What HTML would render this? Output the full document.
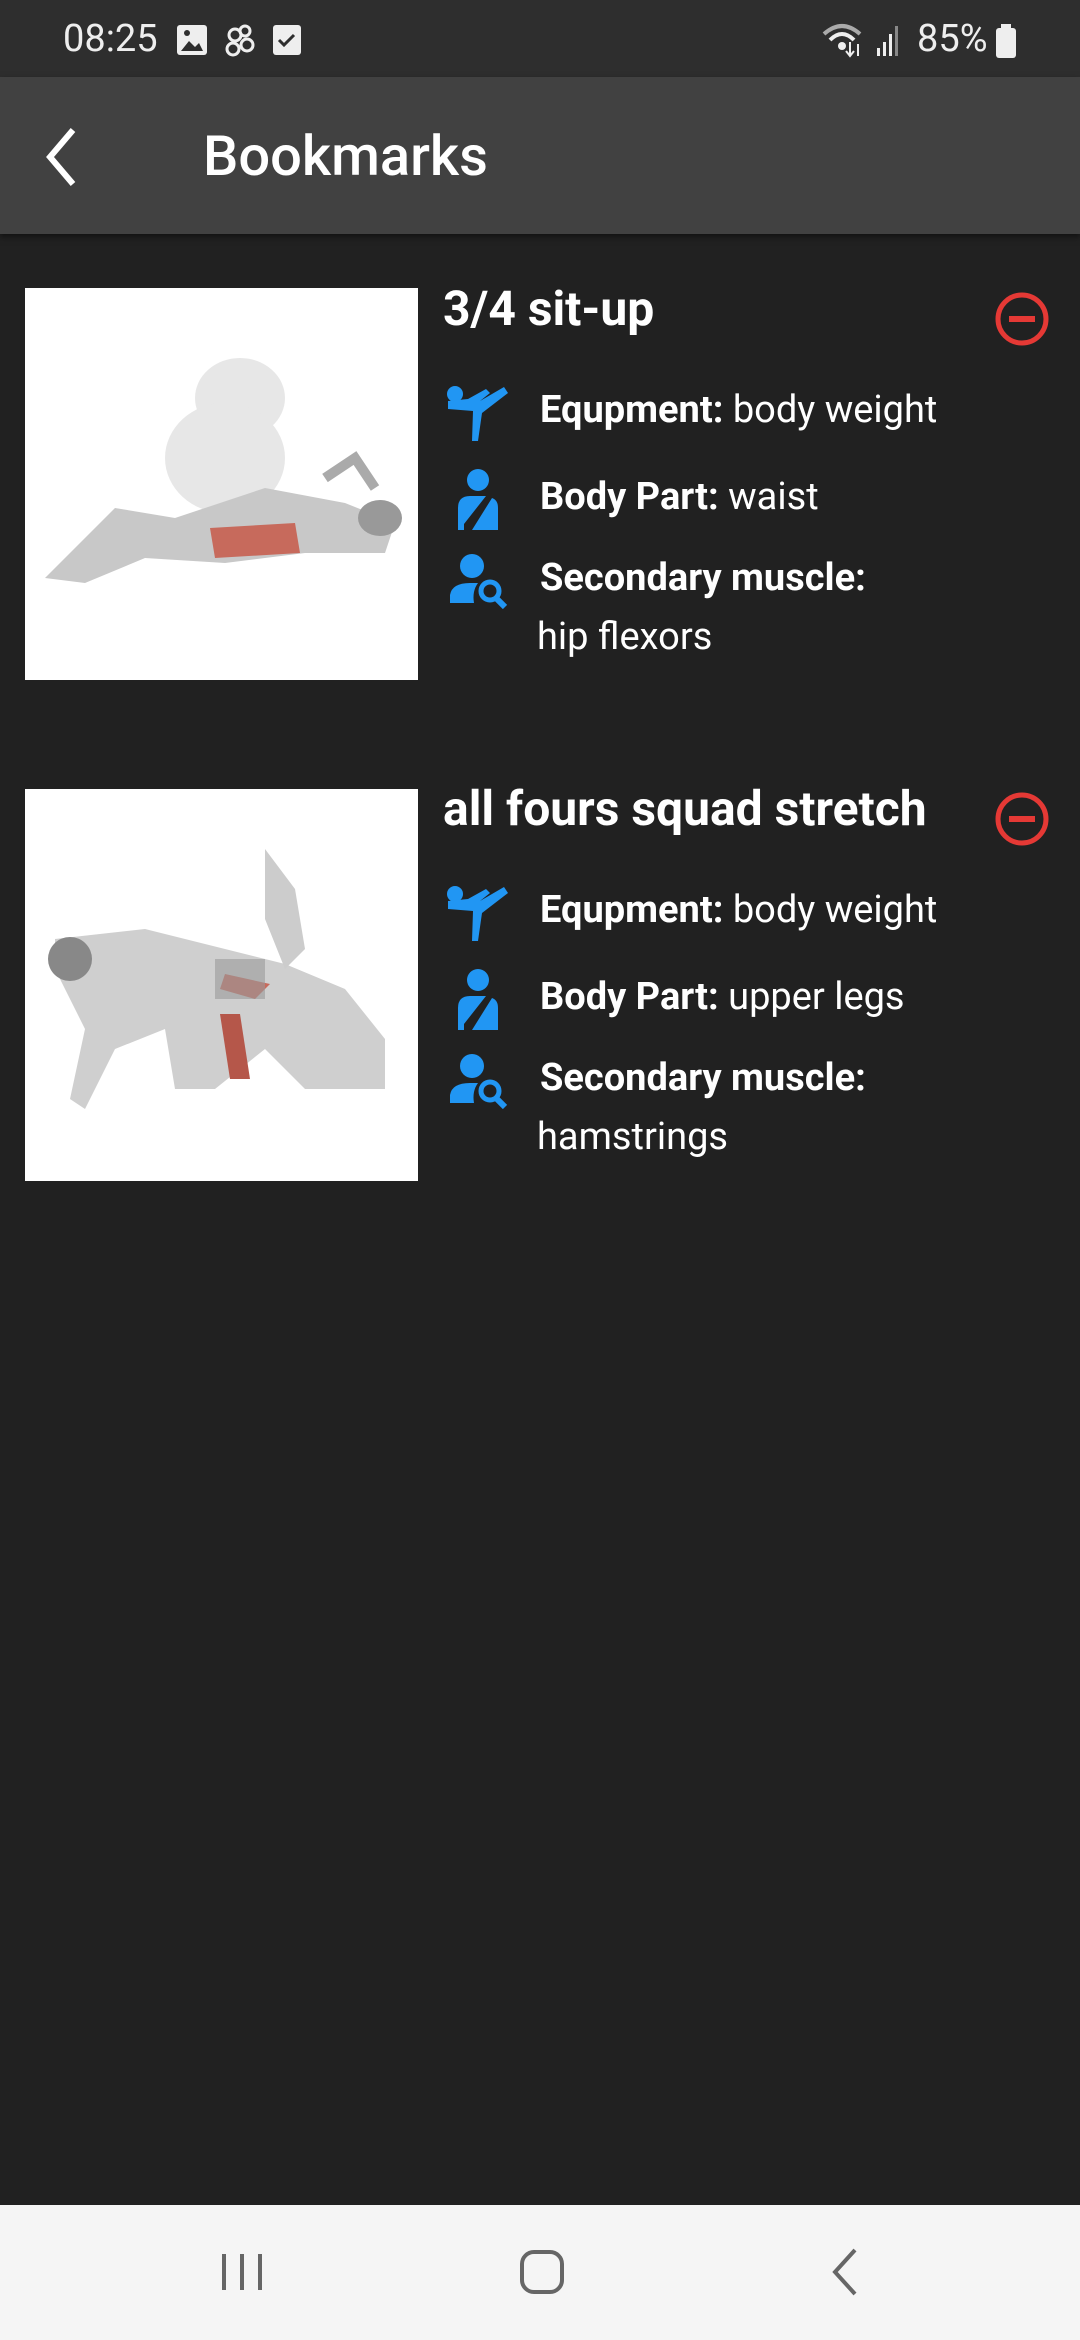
<!DOCTYPE html>
<html><head><meta charset="utf-8"><style>
*{margin:0;padding:0;box-sizing:border-box}
body{width:1080px;height:2340px;background:#212121;font-family:"Roboto","Liberation Sans",sans-serif;color:#fff;position:relative;overflow:hidden}
.sb{position:absolute;top:0;left:0;width:1080px;height:77px;background:#2e2e2e}
.ab{position:absolute;top:77px;left:0;width:1080px;height:157px;background:#414141;box-shadow:0 3px 6px rgba(0,0,0,.5)}
.t{position:absolute;white-space:nowrap}
.img{position:absolute;left:25px;width:393px;height:392px;background:#fff}
.title{font-size:48px;font-weight:bold}
.row{font-size:38px}
.row b{font-weight:bold}
.nav{position:absolute;left:0;top:2205px;width:1080px;height:135px;background:#f5f5f5}
</style></head><body>
<div class="sb">
<div class="t" style="left:63px;top:17px;font-size:38px;color:#eee">08:25</div>
<svg class="t" style="left:175px;top:23px" width="180" height="36"><rect x="2" y="2" width="30" height="30" rx="3" fill="#eee"/><path d="M6 28 L14 18 L20 24 L24 20 L28 28Z" fill="#2e2e2e"/><circle cx="12" cy="10" r="3" fill="#2e2e2e"/>
<g fill="none" stroke="#eee" stroke-width="3"><circle cx="60" cy="12" r="6"/><circle cx="72" cy="22" r="6"/><circle cx="58" cy="26" r="6"/><circle cx="70" cy="8" r="5"/></g>
<rect x="98" y="2" width="28" height="30" rx="3" fill="#eee"/><path d="M104 17 l5 5 l10-10" stroke="#2e2e2e" stroke-width="3" fill="none"/></svg>
<svg class="t" style="left:820px;top:20px" width="80" height="40"><path d="M4 14 Q22 -2 40 14" stroke="#aaa" stroke-width="4" fill="none"/><path d="M10 20 Q22 8 34 20" stroke="#eee" stroke-width="4" fill="none"/><circle cx="22" cy="26" r="4" fill="#eee"/><path d="M30 22v14M26 31l4 5 4-5M38 36V24" stroke="#eee" stroke-width="2" fill="none"/><rect x="57" y="28" width="3" height="8" fill="#eee"/><rect x="63" y="22" width="3" height="14" fill="#eee"/><rect x="69" y="14" width="3" height="22" fill="#eee"/><rect x="75" y="6" width="3" height="30" fill="#888"/></svg>
<div class="t" style="left:917px;top:17px;font-size:38px;color:#eee">85%</div>
<svg class="t" style="left:995px;top:24px" width="22" height="36"><rect x="6" y="0" width="10" height="5" fill="#eee"/><rect x="1" y="4" width="20" height="30" rx="3" fill="#eee"/></svg>
</div>
<div class="ab">
<svg class="t" style="left:40px;top:50px" width="40" height="60"><path d="M33 3 L10 30 L33 57" stroke="#fff" stroke-width="6" fill="none"/></svg>
<div class="t" style="left:203px;top:46px;font-size:56px;font-weight:500">Bookmarks</div>
</div>

<div class="img" style="top:288px">
<svg width="393" height="392"><g opacity=".35" fill="#bbb"><ellipse cx="215" cy="110" rx="45" ry="40"/><ellipse cx="200" cy="170" rx="60" ry="55"/></g>
<path d="M20 290 L90 220 L150 230 L240 200 L320 215 L370 235 L360 265 L280 265 L200 275 L120 270 L60 295Z" fill="#c8c8c8"/>
<ellipse cx="355" cy="230" rx="22" ry="18" fill="#999"/><path d="M185 240 L270 235 L275 265 L190 270Z" fill="#c76a5c"/>
<path d="M300 190 L330 170 L350 200" stroke="#aaa" stroke-width="10" fill="none"/></svg>
</div>
<div class="t title" style="left:443px;top:280px">3/4 sit-up</div>
<svg class="t" style="left:993px;top:290px" width="58" height="58"><circle cx="29" cy="29" r="24" stroke="#e53935" stroke-width="5" fill="none"/><rect x="16" y="26" width="26" height="6" fill="#e53935"/></svg>

<svg class="t" style="left:446px;top:385px" width="70" height="60"><g fill="#2196f3"><circle cx="9" cy="9" r="8"/><path d="M2 16 L22 14 L40 4 L44 8 L34 16 L58 2 L62 8 L36 28 L32 56 L26 56 L27 26 L2 24Z"/></g></svg>
<div class="t row" style="left:540px;top:388px"><b>Equpment:</b> body weight</div>
<svg class="t" style="left:452px;top:468px" width="60" height="64"><g fill="#2196f3"><circle cx="26" cy="12" r="11"/><path d="M6 62 L6 40 Q6 28 18 28 L34 28 L12 56 L12 62Z M20 62 L40 30 Q46 32 46 40 L46 62Z"/></g></svg>
<div class="t row" style="left:540px;top:475px"><b>Body Part:</b> waist</div>
<svg class="t" style="left:448px;top:553px" width="64" height="56"><g fill="#2196f3"><circle cx="24" cy="13" r="12"/><path d="M2 50 L2 42 Q4 30 22 30 L30 30 Q24 38 26 50Z"/><circle cx="42" cy="38" r="9" fill="none" stroke="#2196f3" stroke-width="5"/><path d="M47 44 L57 54" stroke="#2196f3" stroke-width="6"/></g></svg>
<div class="t row" style="left:540px;top:556px"><b>Secondary muscle:</b></div>
<div class="t row" style="left:537px;top:615px">hip flexors</div>

<div class="img" style="top:789px">
<svg width="393" height="392"><path d="M30 150 L120 140 L200 160 L260 175 L320 200 L360 250 L360 300 L280 300 L240 260 L190 300 L150 300 L140 240 L90 260 L60 320 L45 310 L60 240 L30 180Z" fill="#cfcfcf"/>
<ellipse cx="45" cy="170" rx="22" ry="22" fill="#888"/><path d="M240 60 L270 100 L280 160 L260 180 L240 130Z" fill="#ccc"/>
<path d="M200 185 L245 195 L230 210 L195 200Z" fill="#c76a5c"/><path d="M195 225 L215 225 L225 290 L205 290Z" fill="#b5574a"/><rect x="190" y="170" width="50" height="40" fill="#999" opacity=".6"/></svg>
</div>
<div class="t title" style="left:443px;top:780px">all fours squad stretch</div>
<svg class="t" style="left:993px;top:790px" width="58" height="58"><circle cx="29" cy="29" r="24" stroke="#e53935" stroke-width="5" fill="none"/><rect x="16" y="26" width="26" height="6" fill="#e53935"/></svg>

<svg class="t" style="left:446px;top:885px" width="70" height="60"><g fill="#2196f3"><circle cx="9" cy="9" r="8"/><path d="M2 16 L22 14 L40 4 L44 8 L34 16 L58 2 L62 8 L36 28 L32 56 L26 56 L27 26 L2 24Z"/></g></svg>
<div class="t row" style="left:540px;top:888px"><b>Equpment:</b> body weight</div>
<svg class="t" style="left:452px;top:968px" width="60" height="64"><g fill="#2196f3"><circle cx="26" cy="12" r="11"/><path d="M6 62 L6 40 Q6 28 18 28 L34 28 L12 56 L12 62Z M20 62 L40 30 Q46 32 46 40 L46 62Z"/></g></svg>
<div class="t row" style="left:540px;top:975px"><b>Body Part:</b> upper legs</div>
<svg class="t" style="left:448px;top:1053px" width="64" height="56"><g fill="#2196f3"><circle cx="24" cy="13" r="12"/><path d="M2 50 L2 42 Q4 30 22 30 L30 30 Q24 38 26 50Z"/><circle cx="42" cy="38" r="9" fill="none" stroke="#2196f3" stroke-width="5"/><path d="M47 44 L57 54" stroke="#2196f3" stroke-width="6"/></g></svg>
<div class="t row" style="left:540px;top:1056px"><b>Secondary muscle:</b></div>
<div class="t row" style="left:537px;top:1115px">hamstrings</div>

<div class="nav">
<svg class="t" style="left:220px;top:45px" width="50" height="44"><g stroke="#666" stroke-width="4"><path d="M4 4v36M22 4v36M40 4v36"/></g></svg>
<svg class="t" style="left:518px;top:43px" width="48" height="48"><rect x="4" y="4" width="40" height="40" rx="12" stroke="#666" stroke-width="4" fill="none"/></svg>
<svg class="t" style="left:830px;top:42px" width="30" height="50"><path d="M25 3 L5 25 L25 47" stroke="#666" stroke-width="4" fill="none"/></svg>
</div>
</body></html>
